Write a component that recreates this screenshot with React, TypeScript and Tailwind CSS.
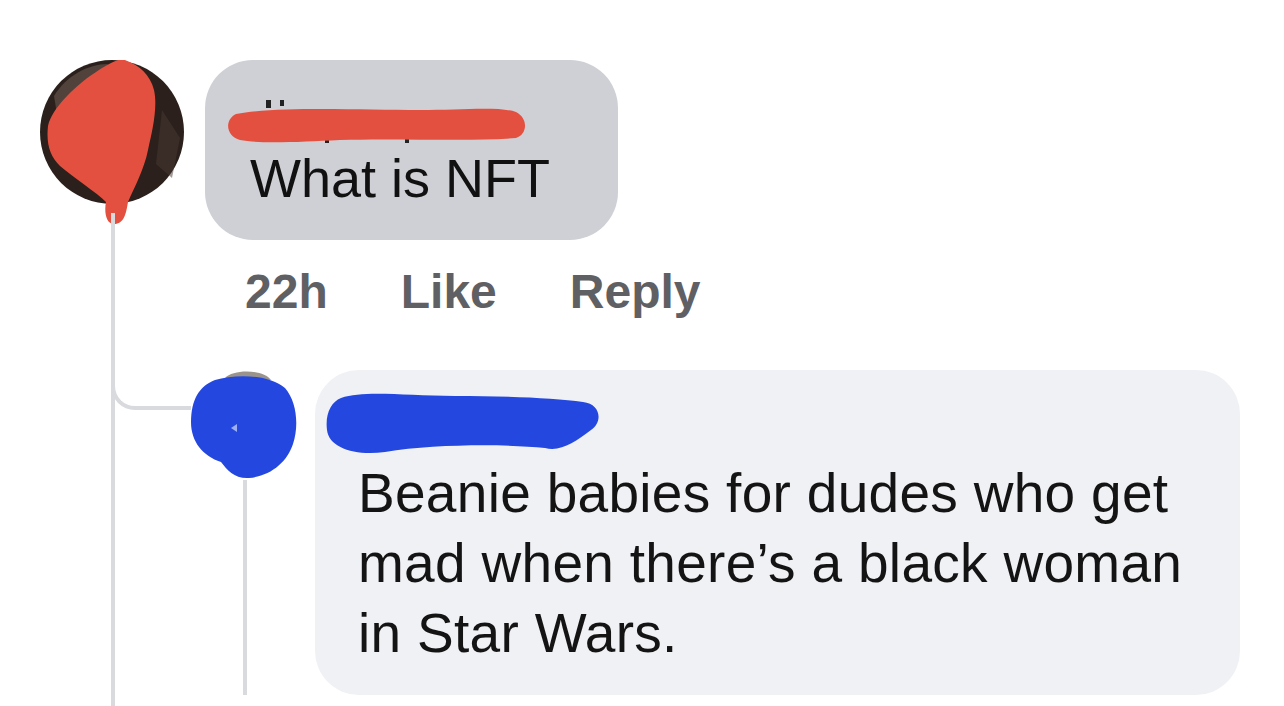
import React from "react";

function RedAvatar() {
  return (
    <svg width="145" height="165" viewBox="0 0 145 165" className="shrink-0">
      <circle cx="72" cy="72" r="72" fill="#2b201b" />
      <path d="M14 36 C26 16 48 4 68 4 L56 30 L18 60 Z" fill="#6a5a52" opacity="0.6" />
      <path d="M122 50 L140 78 L132 118 L116 104 Z" fill="#4a3a33" opacity="0.5" />
      <path
        d="M82 -1 C98 4 110 14 114 30 C118 48 112 72 108 90 C104 110 94 128 88 142 C86 154 84 164 74 164 C66 164 64 152 66 142 C56 132 34 118 20 106 C10 96 6 84 8 66 C12 48 34 28 50 16 C62 8 72 1 82 -1 Z"
        fill="#e4503f"
      />
    </svg>
  );
}

function BlueAvatar() {
  return (
    <svg width="112" height="110" viewBox="0 0 112 110" className="shrink-0">
      <path d="M40 8 C48 -1 78 -1 86 10 L40 12 Z" fill="#9a948c" />
      <path
        d="M30 10 C50 4 84 4 100 18 C112 32 114 56 108 74 C102 92 86 106 64 108 C50 109 42 100 36 92 C18 86 6 72 6 52 C6 30 14 16 30 10 Z"
        fill="#2448df"
      />
      <path d="M46 58 L52 54 L52 62 Z" fill="#9fb0f0" />
    </svg>
  );
}

function RedName() {
  return (
    <svg width="310" height="50" viewBox="0 0 310 50" className="-ml-[30px]">
      <rect x="46" y="4" width="5" height="8" fill="#222" />
      <rect x="60" y="4" width="4" height="6" fill="#222" />
      <rect x="105" y="38" width="4" height="9" fill="#222" />
      <rect x="185" y="38" width="4" height="9" fill="#222" />
      <path
        d="M16 18 C60 10 140 14 200 14 C240 14 280 10 296 16 C308 22 308 38 296 42 C250 46 180 42 120 44 C80 46 40 48 20 44 C6 40 4 24 16 18 Z"
        fill="#e4503f"
      />
    </svg>
  );
}

function BlueName() {
  return (
    <svg width="280" height="70" viewBox="0 0 280 70">
      <path
        d="M16 10 C40 2 80 8 130 8 C180 8 230 10 258 14 C276 16 278 34 266 42 C250 54 236 64 220 60 C180 56 110 56 60 64 C30 68 4 60 2 42 C0 26 6 14 16 10 Z"
        fill="#2448df"
      />
    </svg>
  );
}

export default function App() {
  return (
    <div className="w-[1284px] h-[706px] overflow-hidden bg-white flex pl-[40px] pt-[60px] font-['Liberation_Sans',Arial,sans-serif] text-[#111]">
      <div className="flex flex-col items-center w-[145px] shrink-0">
        <RedAvatar />
        <div className="w-[4px] flex-1 bg-[#d9dadd] -mt-[12px]" />
      </div>

      <div className="flex flex-col">
        <div className="ml-[20px] w-[413px] bg-[#cfd0d5] rounded-[48px] pl-[45px] pt-[36px] pb-[30px]">
          <RedName />
          <div className="text-[54px] leading-[64px]">What is NFT</div>
        </div>

        <div className="ml-[60px] mt-[22px] flex gap-[73px] text-[48px] leading-[60px] font-bold text-[#5f6064]">
          <span>22h</span>
          <span>Like</span>
          <span>Reply</span>
        </div>

        <div className="relative mt-[48px] flex">
          <div className="absolute left-[-74px] top-[-2px] w-[80px] h-[42px] border-l-4 border-b-4 border-[#d9dadd] rounded-bl-[24px]" />
          <div className="relative flex flex-col w-[107px] shrink-0">
            <BlueAvatar />
            <div className="ml-[58px] w-[4px] flex-1 bg-[#d9dadd]" />
          </div>
          <div className="ml-[23px] w-[925px] h-[325px] bg-[#f0f1f5] rounded-[44px] pl-[10px] pt-[18px]">
            <BlueName />
            <div className="ml-[33px] text-[55px] leading-[70px] tracking-[0.3px] text-[#141414]">
              Beanie babies for dudes who get
              <br />
              mad when there’s a black woman
              <br />
              in Star Wars.
            </div>
          </div>
        </div>
      </div>
    </div>
  );
}
